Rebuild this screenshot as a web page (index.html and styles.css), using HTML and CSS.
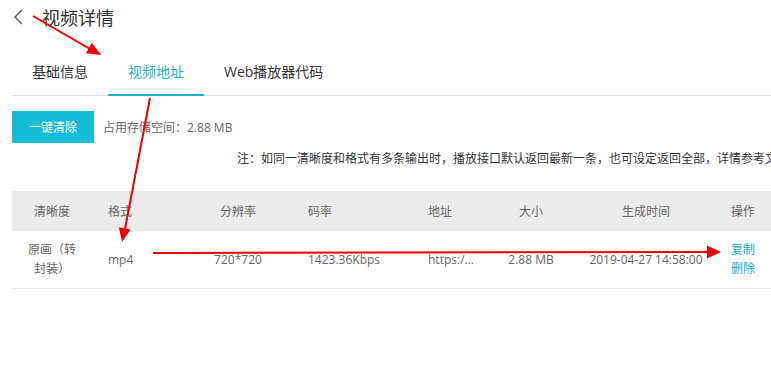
FILE: index.html
```html
<!DOCTYPE html>
<html lang="zh-CN">
<head>
    <meta charset="UTF-8">
    <title>视频详情</title>
    <link rel="stylesheet" href="styles.css">
</head>
<body>
<div class="page">
    <div class="header">
        <svg class="back" width="12" height="16" viewBox="0 0 12 16"><path d="M9 1 L2 8 L9 15" fill="none" stroke="#555" stroke-width="1.4"/></svg>
        <span class="title">视频详情</span>
    </div>
    <ul class="tabs">
        <li>基础信息</li>
        <li class="on">视频地址</li>
        <li>Web播放器代码</li>
    </ul>
    <div class="content">
        <div class="toolbar">
            <button class="btn">一键清除</button>
            <span class="usage">占用存储空间：2.88 MB</span>
        </div>
        <p class="note">注：如同一清晰度和格式有多条输出时，播放接口默认返回最新一条，也可设定返回全部，详情参考文档。</p>
        <table class="list">
            <colgroup>
                <col style="width:80px">
                <col style="width:86px">
                <col style="width:120px">
                <col style="width:120px">
                <col style="width:80px">
                <col style="width:66px">
                <col style="width:164px">
                <col style="width:43px">
            </colgroup>
            <thead>
            <tr>
                <th class="c">清晰度</th>
                <th class="fmt">格式</th>
                <th class="c">分辨率</th>
                <th class="pl">码率</th>
                <th class="pl">地址</th>
                <th class="c">大小</th>
                <th class="c">生成时间</th>
                <th class="op">操作</th>
            </tr>
            </thead>
            <tbody>
            <tr>
                <td class="c def">原画（转封装）</td>
                <td class="fmt">mp4</td>
                <td class="c">720*720</td>
                <td class="pl">1423.36Kbps</td>
                <td class="pl">https:/...</td>
                <td class="c">2.88 MB</td>
                <td class="c">2019-04-27 14:58:00</td>
                <td class="op"><a href="#">复制</a><a href="#">删除</a></td>
            </tr>
            </tbody>
        </table>
    </div>
</div>
<svg class="marks" width="771" height="376" viewBox="0 0 771 376">
    <g stroke="#e00" stroke-width="2" fill="none">
        <line x1="33" y1="16" x2="90" y2="49"/>
        <line x1="150" y1="98" x2="125" y2="229"/>
        <line x1="153" y1="253" x2="708" y2="252"/>
    </g>
    <g fill="#e00">
        <polygon points="101,55 85.9,53.2 91.9,42.8"/>
        <polygon points="122,242 118.8,227.2 130.6,229.4"/>
        <polygon points="721,252 707,245.5 707,258.5"/>
    </g>
</svg>
</body>
</html>
```

FILE: styles.css
```css
*{
    margin: 0;
    padding: 0;
    list-style: none;
    box-sizing: border-box;
}
body{
    width: 771px;
    height: 376px;
    overflow: hidden;
    position: relative;
    background: #fff;
    font-family: "Open Sans", "Noto Sans CJK SC", sans-serif;
    color: #333;
}
.header{
    height: 34px;
    display: flex;
    align-items: center;
    padding-left: 13px;
}
.header .back{
    display: block;
}
.header .title{
    margin-left: 17px;
    font-size: 18px;
    color: #333;
}
.tabs{
    display: flex;
    margin: 15px 0 0 12px;
    border-bottom: 1px solid #ddd;
    height: 47px;
}
.tabs li{
    padding: 0 20px;
    height: 46px;
    line-height: 46px;
    font-size: 14px;
    color: #333;
}
.tabs li.on{
    color: #1db3cb;
    border-bottom: 2px solid #1db3cb;
    height: 47px;
    line-height: 46px;
}
.content{
    padding-left: 12px;
}
.toolbar{
    margin-top: 15px;
    display: flex;
    align-items: center;
}
.btn{
    width: 82px;
    height: 32px;
    border: none;
    background: #14bcd6;
    color: #fff;
    font-family: "Open Sans", "Noto Sans CJK SC", sans-serif;
    font-size: 12px;
}
.usage{
    margin-left: 9px;
    font-size: 12px;
    color: #666;
}
.note{
    margin-top: 6px;
    padding-left: 225px;
    height: 20px;
    line-height: 20px;
    font-size: 12px;
    color: #333;
    white-space: nowrap;
}
.list{
    margin-top: 22px;
    width: 759px;
    table-layout: fixed;
    border-collapse: collapse;
    font-size: 12px;
    color: #666;
}
.list th{
    height: 40px;
    background: #ebebeb;
    font-weight: normal;
    text-align: left;
}
.list td{
    height: 57px;
    border-bottom: 1px solid #e8e8e8;
    text-align: left;
    line-height: 19px;
}
.list .c{
    text-align: center;
}
.list .def{
    padding: 0 12px;
}
.list .fmt{
    padding-left: 16px;
}
.list .pl{
    padding-left: 10px;
}
.list .op{
    padding-left: 3px;
}
.list .op a{
    display: block;
    color: #1ba8cc;
    text-decoration: none;
}
.marks{
    position: absolute;
    left: 0;
    top: 0;
    pointer-events: none;
}
```
